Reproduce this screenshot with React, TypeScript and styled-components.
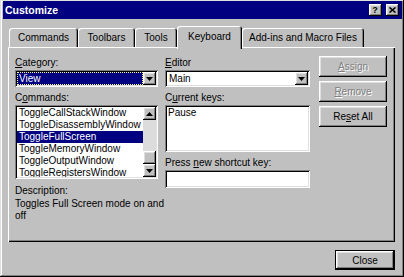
import React from "react";
import styled, { createGlobalStyle, css } from "styled-components";

const GlobalStyle = createGlobalStyle`
  html, body { margin: 0; padding: 0; background: #c0c0c0; }
  body {
    font-family: "Liberation Sans", Arial, sans-serif;
    font-size: 10px;
    color: #000;
  }
  * { box-sizing: border-box; }
  u { text-decoration: underline; text-underline-offset: 1px; }
`;

const raised = css`
  box-shadow: inset -1px -1px #000, inset 1px 1px #fff, inset -2px -2px #808080,
    inset 2px 2px #dfdfdf;
`;

const sunken = css`
  box-shadow: inset 1px 1px #808080, inset -1px -1px #fff, inset 2px 2px #000,
    inset -2px -2px #dfdfdf;
`;

const Window = styled.div`
  width: 404px;
  height: 277px;
  background: #c0c0c0;
  display: flex;
  flex-direction: column;
  padding: 1px 2px 3px 3px;
  box-shadow: inset -1px -1px #000, inset 1px 1px #dfdfdf, inset -2px -2px #808080,
    inset 2px 2px #fff;
  overflow: hidden;
`;

const TitleBar = styled.div`
  height: 18px;
  flex: none;
  background: #000080;
  display: flex;
  align-items: center;
  padding: 0 3px 0 2px;
`;

const Title = styled.div`
  flex: 1;
  color: #fff;
  font-weight: bold;
  font-size: 10.5px;
  line-height: 18px;
`;

const CaptionButtons = styled.div`
  display: flex;
  gap: 4px;
`;

const CaptionButton = styled.div`
  width: 13px;
  height: 12px;
  background: #c0c0c0;
  ${raised};
  display: flex;
  align-items: center;
  justify-content: center;
  font-weight: bold;
  font-size: 9px;
  line-height: 12px;
  padding: 0 1px 1px 0;
`;

const Body = styled.div`
  flex: 1;
  display: flex;
  flex-direction: column;
  padding: 7px 7px 0 5px;
`;

const TabStrip = styled.div`
  display: flex;
  align-items: flex-end;
  height: 21px;
  padding-left: 1px;
  position: relative;
  z-index: 1;
`;

const Tab = styled.div<{ $w: number; $active?: boolean }>`
  width: ${(p) => p.$w}px;
  height: ${(p) => (p.$active ? 23 : 19)}px;
  margin-bottom: ${(p) => (p.$active ? -2 : 0)}px;
  padding-bottom: ${(p) => (p.$active ? 3 : 0)}px;
  background: #c0c0c0;
  border-radius: 3px 3px 0 0;
  box-shadow: inset 1px 1px #fff, inset -1px 0 #000, inset -2px 0 #808080;
  display: flex;
  align-items: center;
  justify-content: center;
  white-space: nowrap;
`;

const Panel = styled.div`
  height: 195px;
  flex: none;
  background: #c0c0c0;
  box-shadow: inset 1px 1px #fff, inset -1px -1px #000, inset -2px -2px #808080;
  padding: 9px 8px 0 7px;
  display: flex;
`;

const Column = styled.div<{ $w: number; $ml?: number }>`
  width: ${(p) => p.$w}px;
  margin-left: ${(p) => p.$ml ?? 0}px;
  display: flex;
  flex-direction: column;
`;

const Label = styled.div<{ $mt?: number }>`
  height: 13px;
  line-height: 13px;
  margin-top: ${(p) => p.$mt ?? 0}px;
  margin-bottom: 1px;
  white-space: nowrap;
`;

const ComboBox = styled.div`
  height: 17px;
  padding: 2px;
  display: flex;
  background: #fff;
  ${sunken};
`;

const ComboField = styled.div<{ $selected?: boolean }>`
  flex: 1;
  line-height: 13px;
  padding-left: 2px;
  background: ${(p) => (p.$selected ? "#000080" : "#fff")};
  color: ${(p) => (p.$selected ? "#fff" : "#000")};
  outline: ${(p) => (p.$selected ? "1px dotted #ffff80" : "none")};
  outline-offset: -1px;
`;

const ArrowButton = styled.div`
  width: 13px;
  height: 13px;
  flex: none;
  background: #c0c0c0;
  ${raised};
  display: flex;
  align-items: center;
  justify-content: center;
`;

const ListBox = styled.div`
  height: 74px;
  padding: 2px;
  display: flex;
  background: #fff;
  ${sunken};
`;

const ListItems = styled.div`
  flex: 1;
  overflow: hidden;
`;

const ListItem = styled.div<{ $selected?: boolean }>`
  height: 12px;
  line-height: 12px;
  padding-left: 2px;
  white-space: nowrap;
  background: ${(p) => (p.$selected ? "#000080" : "transparent")};
  color: ${(p) => (p.$selected ? "#fff" : "#000")};
`;

const ScrollBar = styled.div`
  width: 13px;
  display: flex;
  flex-direction: column;
`;

const ScrollTrack = styled.div`
  flex: 1;
  background: #dcdcdc;
  display: flex;
  flex-direction: column;
  justify-content: flex-end;
`;

const ScrollThumb = styled.div`
  height: 13px;
  background: #c0c0c0;
  ${raised};
`;

const TextBox = styled.div<{ $h: number }>`
  height: ${(p) => p.$h}px;
  padding: 2px 3px;
  line-height: 12px;
  background: #fff;
  ${sunken};
`;

const Description = styled.div`
  line-height: 12px;
  white-space: nowrap;
`;

const ButtonStack = styled.div`
  display: flex;
  flex-direction: column;
  gap: 4px;
`;

const Button = styled.div<{ $disabled?: boolean; $default?: boolean; $w?: number }>`
  height: ${(p) => (p.$default ? 20 : 21)}px;
  width: ${(p) => (p.$w ? `${p.$w}px` : "auto")};
  background: #c0c0c0;
  ${raised};
  border: ${(p) => (p.$default ? "1px solid #000" : "none")};
  display: flex;
  align-items: center;
  justify-content: center;
  white-space: nowrap;
  color: ${(p) => (p.$disabled ? "#808080" : "#000")};
  text-shadow: ${(p) => (p.$disabled ? "1px 1px #fff" : "none")};
`;

const Footer = styled.div`
  display: flex;
  justify-content: flex-end;
  margin-top: 8px;
`;

const Down = () => (
  <svg width="7" height="4" viewBox="0 0 7 4">
    <path d="M0 0h7L3.5 4z" fill="#000" />
  </svg>
);

const Up = () => (
  <svg width="7" height="4" viewBox="0 0 7 4">
    <path d="M0 4h7L3.5 0z" fill="#000" />
  </svg>
);

const CloseGlyph = () => (
  <svg width="7" height="6" viewBox="0 0 7 6">
    <path d="M0.5 0.5L6.5 5.5M6.5 0.5L0.5 5.5" stroke="#000" strokeWidth="1.6" />
  </svg>
);

const commands = [
  "ToggleCallStackWindow",
  "ToggleDisassemblyWindow",
  "ToggleFullScreen",
  "ToggleMemoryWindow",
  "ToggleOutputWindow",
  "ToggleRegistersWindow",
];

const tabs = [
  { label: "Commands", w: 69 },
  { label: "Toolbars", w: 57 },
  { label: "Tools", w: 42 },
  { label: "Keyboard", w: 65, active: true },
  { label: "Add-ins and Macro Files", w: 122 },
];

export default function App() {
  return (
    <>
      <GlobalStyle />
      <Window>
        <TitleBar>
          <Title>Customize</Title>
          <CaptionButtons>
            <CaptionButton>?</CaptionButton>
            <CaptionButton>
              <CloseGlyph />
            </CaptionButton>
          </CaptionButtons>
        </TitleBar>
        <Body>
          <TabStrip>
            {tabs.map((t) => (
              <Tab key={t.label} $w={t.w} $active={t.active}>
                {t.label}
              </Tab>
            ))}
          </TabStrip>
          <Panel>
            <Column $w={143}>
              <Label>
                <u>C</u>ategory:
              </Label>
              <ComboBox>
                <ComboField $selected>View</ComboField>
                <ArrowButton>
                  <Down />
                </ArrowButton>
              </ComboBox>
              <Label $mt={4}>
                C<u>o</u>mmands:
              </Label>
              <ListBox>
                <ListItems>
                  {commands.map((c) => (
                    <ListItem key={c} $selected={c === "ToggleFullScreen"}>
                      {c}
                    </ListItem>
                  ))}
                </ListItems>
                <ScrollBar>
                  <ArrowButton>
                    <Up />
                  </ArrowButton>
                  <ScrollTrack>
                    <ScrollThumb />
                  </ScrollTrack>
                  <ArrowButton>
                    <Down />
                  </ArrowButton>
                </ScrollBar>
              </ListBox>
              <Label $mt={5}>Description:</Label>
              <Description>
                Toggles Full Screen mode on and
                <br />
                off
              </Description>
            </Column>
            <Column $w={145} $ml={7}>
              <Label>
                <u>E</u>ditor
              </Label>
              <ComboBox>
                <ComboField>Main</ComboField>
                <ArrowButton>
                  <Down />
                </ArrowButton>
              </ComboBox>
              <Label $mt={4}>
                C<u>u</u>rrent keys:
              </Label>
              <TextBox $h={47}>Pause</TextBox>
              <Label $mt={4}>
                Press <u>n</u>ew shortcut key:
              </Label>
              <TextBox $h={18} />
            </Column>
            <Column $w={68} $ml={9}>
              <ButtonStack>
                <Button $disabled>
                  <u>A</u>ssign
                </Button>
                <Button $disabled>
                  <u>R</u>emove
                </Button>
                <Button>
                  Re<u>s</u>et All
                </Button>
              </ButtonStack>
            </Column>
          </Panel>
          <Footer>
            <Button $default $w={60}>
              Close
            </Button>
          </Footer>
        </Body>
      </Window>
    </>
  );
}
